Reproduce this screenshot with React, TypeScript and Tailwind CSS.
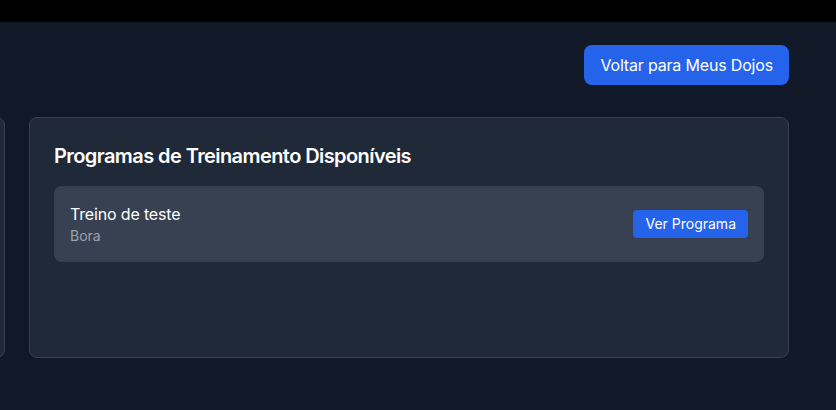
export default function App() {
  return (
    <div className="w-[836px] h-[410px] overflow-hidden bg-[#111827] font-['Inter',sans-serif] text-white">
      <div className="h-[22px] bg-black" />
      <div className="pr-[47px] pt-[23px]">
        <div className="flex justify-end mb-8">
          <button className="bg-[#2563eb] text-white text-base leading-6 tracking-[-0.011em] px-4 py-2 rounded-lg">
            Voltar para Meus Dojos
          </button>
        </div>
        <div className="flex justify-end gap-6">
          <div className="shrink-0 w-[760px] h-[241px] bg-[#1f2937] border border-[#374151] rounded-lg" />
          <div className="shrink-0 w-[760px] h-[241px] bg-[#1f2937] border border-[#374151] rounded-lg p-6">
            <h2 className="text-xl leading-7 font-semibold tracking-[-0.029em] mb-4">Programas de Treinamento Disponíveis</h2>
            <div className="bg-[#374151] rounded-lg p-4 flex items-center justify-between">
              <div>
                <div className="text-base leading-6 tracking-[-0.01em]">Treino de teste</div>
                <div className="text-sm leading-5 text-[#9ca3af]">Bora</div>
              </div>
              <button className="bg-[#2563eb] text-white text-sm leading-5 px-3 py-1 rounded">
                Ver Programa
              </button>
            </div>
          </div>
        </div>
      </div>
    </div>
  );
}
